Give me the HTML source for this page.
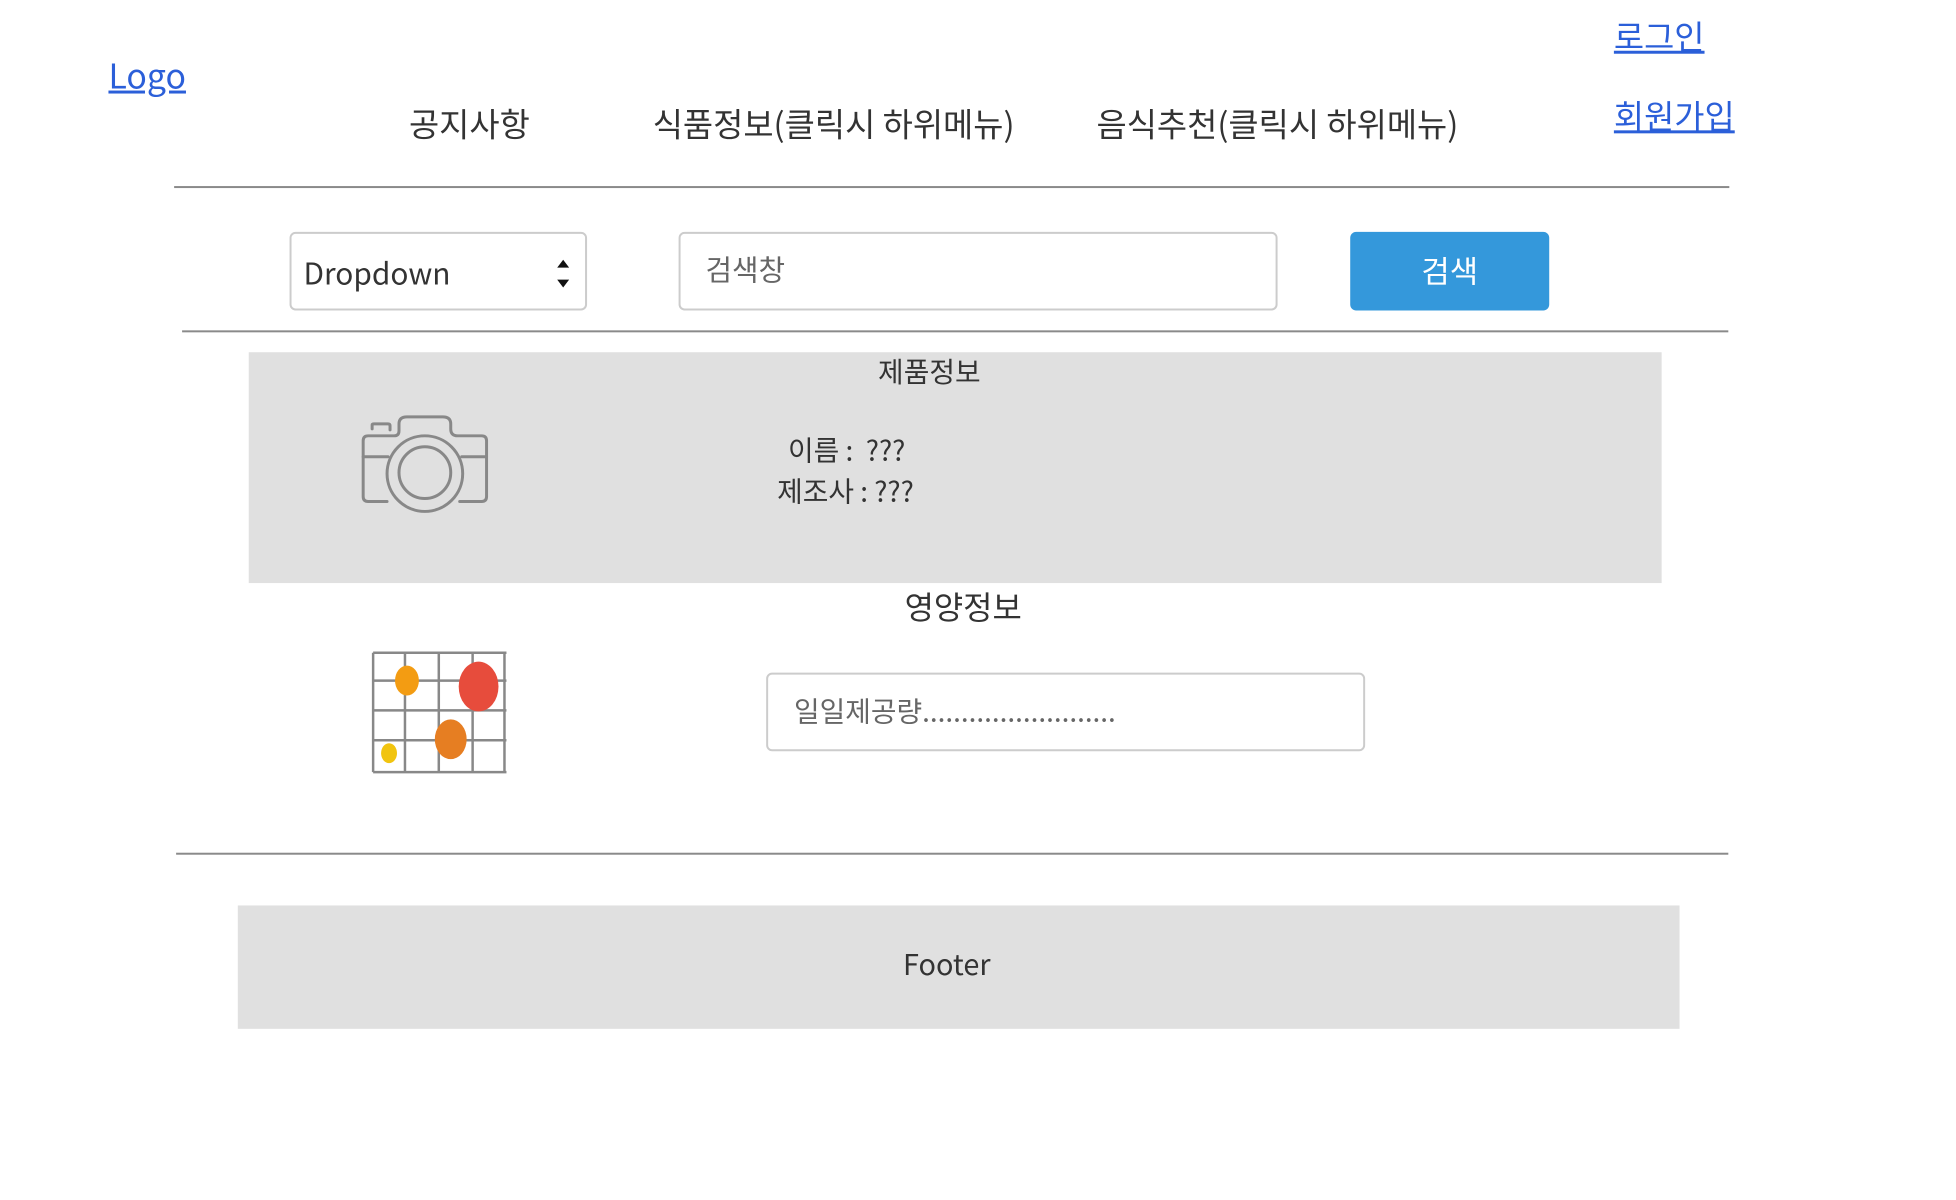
<!DOCTYPE html>
<html><head><meta charset="utf-8"><style>
body{margin:0;width:1956px;height:1200px;background:#fff;position:relative;overflow:hidden;font-family:"Noto Sans CJK KR","Liberation Sans",sans-serif;color:#333}
#w{position:absolute;left:0;top:0;width:1966px;height:1206px;transform:scale(0.995);transform-origin:0 0}
.a{position:absolute;white-space:nowrap;line-height:1}
a{color:#2b5fd9;text-decoration:underline}
.hr{position:absolute;height:2px;background:#8a8a8a}
.box{position:absolute;border:2px solid #ccc;border-radius:6px;box-sizing:border-box;background:#fff}
</style></head><body><div id="w">
<a class="a" style="left:109px;top:58px;font-size:34px">Logo</a>
<a class="a" style="left:1622px;top:19px;font-size:33px">로그인</a>
<a class="a" style="left:1622px;top:99px;font-size:33px">회원가입</a>
<div class="a" style="left:411px;top:107px;font-size:33px">공지사항</div>
<div class="a" style="left:656px;top:107px;font-size:33px">식품정보(클릭시 하위메뉴)</div>
<div class="a" style="left:1102px;top:107px;font-size:33px">음식추천(클릭시 하위메뉴)</div>
<div class="hr" style="left:175px;top:187px;width:1563px"></div>
<div class="box" style="left:291px;top:233px;width:299px;height:79px"></div>
<div class="a" style="left:305px;top:258px;font-size:30px">Dropdown</div>
<svg class="a" style="left:558px;top:257px" width="16" height="36"><path d="M2 12 L8 4 L14 12Z M2 24 L14 24 L8 32Z" fill="#111"/></svg>
<div class="box" style="left:682px;top:233px;width:602px;height:79px"></div>
<div class="a" style="left:709px;top:256px;font-size:29px;color:#666">검색창</div>
<div class="a" style="left:1357px;top:233px;width:200px;height:79px;background:#3498db;border-radius:6px;color:#fff;font-size:31px;text-align:center;line-height:76px">검색</div>
<div class="hr" style="left:183px;top:332px;width:1554px"></div>
<div class="a" style="left:250px;top:354px;width:1420px;height:232px;background:#e0e0e0"></div>
<div class="a" style="left:834px;top:359px;width:200px;text-align:center;font-size:28px">제품정보</div>
<div class="a" style="left:792px;top:438px;font-size:28px">이름 :&nbsp; ???</div>
<div class="a" style="left:781px;top:479px;font-size:28px">제조사 : ???</div>
<svg class="a" style="left:343px;top:403px" width="200" height="400" viewBox="0 0 200 400">
<g fill="none" stroke="#888" stroke-width="3" stroke-linecap="round">
<path d="M31 28 V24 Q31 23 33 23 H47 Q49 23 49 25 V29"/>
<path d="M46 101 H27 Q22 101 22 96 V40 Q22 35 27 35 H53 Q58 35 58 30 V23 Q58 16 66 16 H102 Q110 16 110 23 V28 Q110 35 117 35 H141 Q146 35 146 40 V96 Q146 101 141 101 H119"/>
<path d="M22 56 H47 M121 56 H146"/>
<circle cx="84" cy="73" r="38"/>
<circle cx="84" cy="72" r="26"/>
</g>
<g stroke="#888" stroke-width="2.5" fill="none">
<path d="M32 253 V373 M64 253 V373 M98 253 V373 M132 253 V373 M164 253 V373 M32 253 H166 M32 281 H166 M32 311 H166 M32 341 H166 M32 373 H166"/>
</g>
<ellipse cx="66" cy="281" rx="12" ry="15" fill="#f39c12"/>
<ellipse cx="138" cy="287" rx="20" ry="25" fill="#e74c3c"/>
<ellipse cx="110" cy="340" rx="16" ry="20" fill="#e67e22"/>
<ellipse cx="48" cy="354" rx="8" ry="10" fill="#f1c40f"/>
</svg>
<div class="a" style="left:858px;top:593px;width:220px;text-align:center;font-size:32px">영양정보</div>
<div class="box" style="left:770px;top:676px;width:602px;height:79px"></div>
<div class="a" style="left:798px;top:700px;font-size:28px;color:#666">일일제공량.........................</div>
<div class="hr" style="left:177px;top:857px;width:1560px"></div>
<div class="a" style="left:239px;top:910px;width:1425px;padding-right:24px;height:124px;background:#e0e0e0;text-align:center;line-height:116px;font-size:29px">Footer</div>
</div></body></html>
